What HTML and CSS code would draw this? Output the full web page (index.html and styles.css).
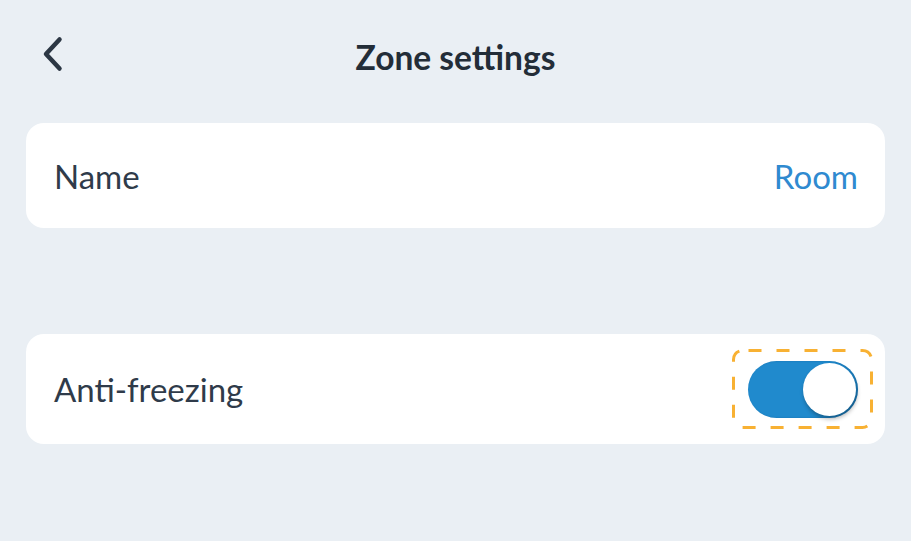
FILE: index.html
```html
<!DOCTYPE html>
<html>
<head>
<meta charset="utf-8">
<link rel="stylesheet" href="styles.css">
</head>
<body>
<div class="screen">
  <header class="topbar">
    <button class="back" aria-label="Back">
      <svg width="24" height="36" viewBox="0 0 24 36"><path d="M18.5 3.5 L5 18 L18.5 32.5" fill="none" stroke="#2c3744" stroke-width="4.5" stroke-linecap="round" stroke-linejoin="round"/></svg>
    </button>
    <h1 class="title">Zone settings</h1>
  </header>
  <div class="card">
    <span class="label">Name</span>
    <span class="value">Room</span>
  </div>
  <div class="card card-toggle">
    <span class="label">Anti-freezing</span>
    <div class="focus">
      <svg class="focus-ring" width="141" height="80" viewBox="0 0 141 80"><rect x="1.5" y="1.5" width="138" height="77" rx="9" fill="none" stroke="#f8b133" stroke-width="3" stroke-dasharray="13 15" stroke-dashoffset="-6"/></svg>
      <div class="switch"><div class="knob"></div></div>
    </div>
  </div>
</div>
</body>
</html>
```
FILE: styles.css
```css
html, body { margin: 0; padding: 0; }
body {
  background: #eaeff4;
  font-family: "Lato", "Noto Sans", sans-serif;
  color: #2f3b4a;
  width: 911px;
  height: 541px;
  overflow: hidden;
}
.screen {
  padding: 0 26px;
}
.topbar {
  height: 123px;
  display: flex;
  align-items: center;
  justify-content: center;
  position: relative;
  padding-bottom: 10px;
  box-sizing: border-box;
}
.back {
  position: absolute;
  left: 15px;
  top: 36px;
  border: 0;
  background: none;
  padding: 0;
  display: flex;
}
.title {
  margin: 0;
  font-size: 33.5px;
  font-weight: 700;
  color: #232d38;
}
.card {
  background: #fff;
  border-radius: 18px;
  height: 105px;
  display: flex;
  align-items: center;
  justify-content: space-between;
  padding: 0 27px 0 28px;
}
.card-toggle {
  margin-top: 106px;
  height: 110px;
  padding-right: 12px;
}
.label {
  font-size: 33px;
  color: #2f3b4a;
}
.value {
  font-size: 33px;
  color: #2f8ad0;
}
.focus {
  position: relative;
  width: 141px;
  height: 80px;
  display: flex;
  align-items: center;
  justify-content: center;
}
.focus-ring {
  position: absolute;
  left: 0;
  top: 0;
}
.switch {
  width: 110px;
  height: 57px;
  border-radius: 29px;
  background: #208acd;
  position: relative;
  box-shadow: inset -1px 0 2px rgba(0,60,110,0.35);
}
.knob {
  position: absolute;
  right: 2px;
  top: 2px;
  width: 53px;
  height: 53px;
  border-radius: 50%;
  background: #fff;
  box-shadow: 1px 3px 4px rgba(0,0,0,0.3);
}
```
